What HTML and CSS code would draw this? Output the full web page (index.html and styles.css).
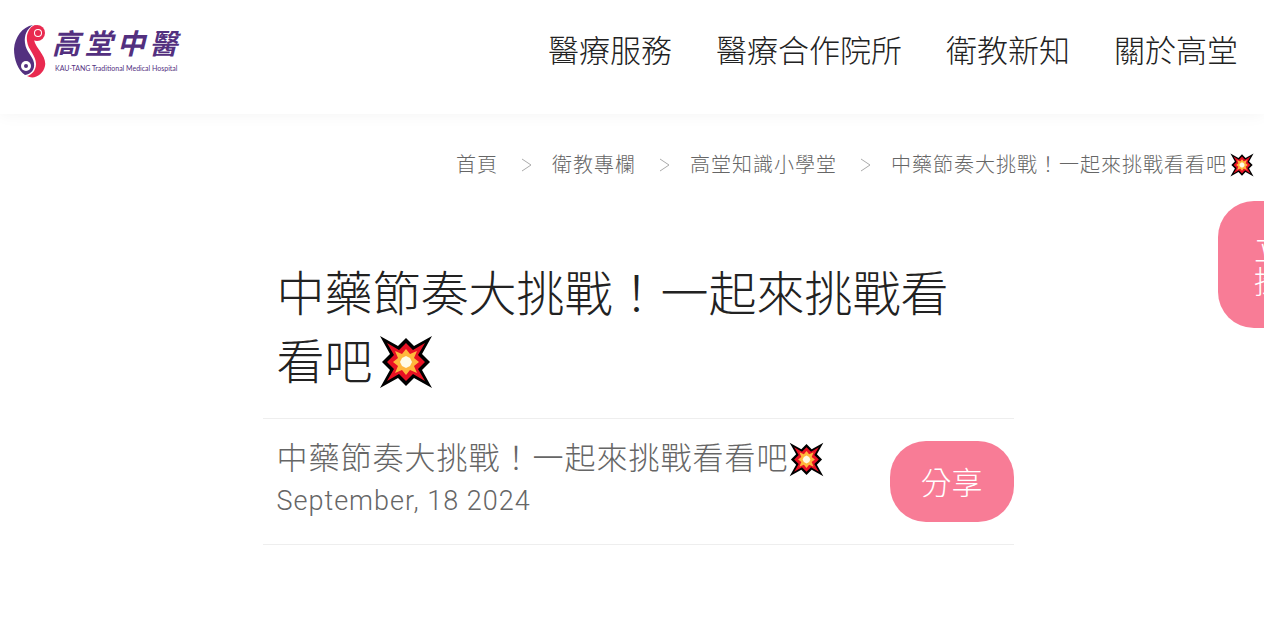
FILE: index.html
```html
<!DOCTYPE html>
<html lang="zh-Hant">
<head>
<meta charset="utf-8">
<meta name="viewport" content="width=device-width, initial-scale=1">
<title>中藥節奏大挑戰！一起來挑戰看看吧</title>
<link rel="stylesheet" href="styles.css">
</head>
<body>
<svg class="defs" width="0" height="0" aria-hidden="true">
  <symbol id="boom" viewBox="0 0 54 54">
    <path fill="#000" d="M1 1 L19 11 L27 3 L35 11 L53 1 L43 19 L51 27 L43 35 L53 53 L35 43 L27 51 L19 43 L1 53 L11 35 L3 27 L11 19Z"/>
    <path fill="#e81123" d="M8 8 L20 15 L27 8 L34 15 L46 8 L39 20 L46 27 L39 34 L46 46 L34 39 L27 46 L20 39 L8 46 L15 34 L8 27 L15 20Z"/>
    <path fill="#ffb73c" d="M16 16 L23 19 L27 14 L31 19 L38 16 L35 23 L40 27 L35 31 L38 38 L31 35 L27 40 L23 35 L16 38 L19 31 L14 27 L19 23Z"/>
    <path fill="#fffbe6" d="M23 23 L27 21 L31 23 L33 27 L31 31 L27 33 L23 31 L21 27Z"/>
  </symbol>
</svg>
<header class="header">
  <a class="logo" href="#" aria-label="高堂中醫">
    <svg class="logo-mark" viewBox="0 0 32 54" aria-hidden="true">
      <path fill="#53307f" d="M19 1 C8 3 1 13 0 25 C0 36 4 46 11 51 C17 50 21 46 20 39 C19 32 12 28 11 19 C10 11 13 5 19 1Z"/>
      <path fill="#e92a50" d="M22 1 C15 3 12 10 13 17 C14 26 22 31 22 40 C22 46 18 51 13 52 C20 56 29 51 31 42 C33 32 22 25 20 16 C19 11 20 6 22 1Z"/>
      <circle cx="23" cy="9" r="8" fill="#e92a50"/>
      <circle cx="24" cy="9" r="4" fill="#fff"/>
      <circle cx="24" cy="9" r="3" fill="#e92a50"/>
      <circle cx="12" cy="42" r="5" fill="#fff"/>
      <circle cx="12" cy="42" r="2" fill="#53307f"/>
    </svg>
    <span class="logo-text">
      <span class="logo-name"><span>高</span><span>堂</span><span>中</span><span>醫</span></span>
      <span class="logo-sub">KAU-TANG Traditional Medical Hospital</span>
    </span>
  </a>
  <nav class="nav">
    <a href="#">醫療服務</a>
    <a href="#">醫療合作院所</a>
    <a href="#">衛教新知</a>
    <a href="#">關於高堂</a>
  </nav>
</header>
<nav class="crumbs" aria-label="breadcrumb">
  <a href="#">首頁</a>
  <svg class="sep" viewBox="0 0 10 14" aria-hidden="true"><path d="M0 1 L9 7 L0 13"/></svg>
  <a href="#">衛教專欄</a>
  <svg class="sep" viewBox="0 0 10 14" aria-hidden="true"><path d="M0 1 L9 7 L0 13"/></svg>
  <a href="#">高堂知識小學堂</a>
  <svg class="sep" viewBox="0 0 10 14" aria-hidden="true"><path d="M0 1 L9 7 L0 13"/></svg>
  <span class="current">中藥節奏大挑戰！一起來挑戰看看吧<svg class="boom" aria-hidden="true"><use href="#boom"/></svg></span>
</nav>
<main class="article">
  <h1 class="title">中藥節奏大挑戰！一起來挑戰看看吧<svg class="boom" aria-hidden="true"><use href="#boom"/></svg></h1>
  <div class="meta">
    <div class="meta-text">
      <p class="subtitle">中藥節奏大挑戰！一起來挑戰看看吧<svg class="boom" aria-hidden="true"><use href="#boom"/></svg></p>
      <time class="date" datetime="2024-09-18">September, 18 2024</time>
    </div>
    <button class="share" type="button">分享</button>
  </div>
</main>
<a class="booking" href="#">立即<br>掛號</a>
</body>
</html>
```
FILE: styles.css
```css
* { box-sizing: border-box; }
body {
  margin: 0;
  overflow-x: hidden;
  background: #fff;
  color: #222;
  font-family: Roboto, "Noto Sans CJK TC", sans-serif;
  font-weight: 300;
}
a { color: inherit; text-decoration: none; }
.defs { position: absolute; }
.boom { width: 1em; height: 1em; }

.header {
  display: flex;
  justify-content: space-between;
  align-items: flex-start;
  height: 114px;
  padding: 24px 26px 0 14px;
  background: #fff;
  box-shadow: 0 0 16px rgba(0, 0, 0, 0.05);
}
.logo { display: flex; gap: 6px; color: #53307f; }
.logo-mark { width: 32px; height: 54px; }
.logo-text { display: flex; flex-direction: column; padding-top: 4px; }
.logo-name {
  display: flex;
  justify-content: space-between;
  font-size: 28px;
  font-weight: 700;
  font-style: italic;
  line-height: 34px;
}
.logo-sub {
  padding-left: 3px;
  font-family: Lato, sans-serif;
  font-size: 7px;
  font-weight: 400;
  line-height: 12px;
  white-space: nowrap;
}
.nav { display: flex; gap: 44px; font-size: 31px; line-height: 56px; white-space: nowrap; }

.crumbs {
  display: flex;
  justify-content: flex-end;
  align-items: center;
  padding: 35px 10px 0 0;
  font-size: 20px;
  letter-spacing: 1px;
  line-height: 32px;
  color: #666;
  white-space: nowrap;
}
.crumbs .sep { width: 10px; height: 14px; margin: 0 20px 0 24px; fill: none; stroke: #aaa; }
.current { display: flex; align-items: center; }
.crumbs .boom { width: 24px; height: 24px; margin-left: 3px; }

.article { max-width: 751px; margin: 80px auto 0; position: relative; left: 6px; }
.title {
  margin: 0;
  padding: 0 48px 21px 14px;
  font-size: 48px;
  font-weight: 300;
  line-height: 68px;
}
.title .boom { width: 54px; height: 54px; margin-left: 6px; vertical-align: -10px; }
.meta {
  display: flex;
  justify-content: space-between;
  align-items: flex-start;
  padding: 19px 0 22px 14px;
  border-top: 1px solid #eee;
  border-bottom: 1px solid #eee;
  color: #666;
}
.meta-text { letter-spacing: 1px; }
.subtitle { margin: 0; font-size: 31px; line-height: 42px; }
.subtitle .boom { width: 35px; height: 35px; vertical-align: -8px; }
.date { display: block; font-size: 27px; line-height: 42px; }
.share {
  margin-top: 3px;
  padding: 4px 31px 0;
  border: 0;
  border-radius: 36px;
  background: #f87c96;
  color: #fff;
  font: inherit;
  font-size: 31px;
  line-height: 77px;
}
.booking {
  position: fixed;
  top: 201px;
  right: -88px;
  padding: 32px 36px 29px;
  border-radius: 36px;
  background: #f87c96;
  color: #fff;
  font-size: 31px;
  line-height: 33px;
}
```
